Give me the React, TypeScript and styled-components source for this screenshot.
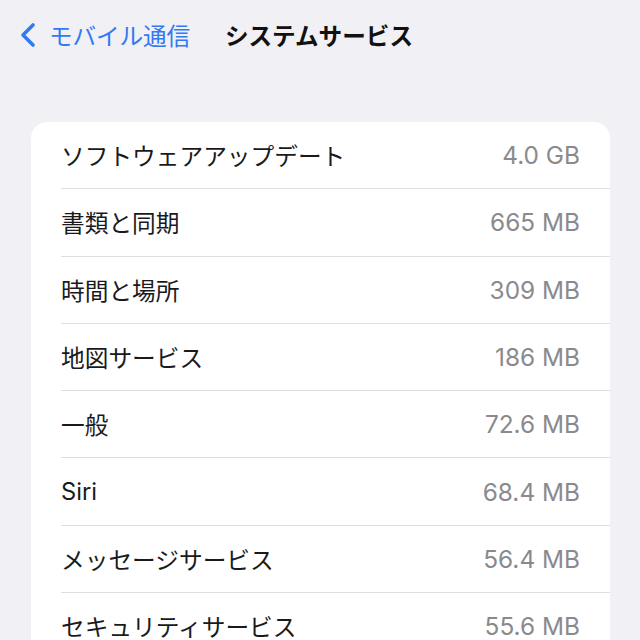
import styled, { createGlobalStyle } from "styled-components";

const GlobalStyle = createGlobalStyle`
  html, body {
    margin: 0;
    padding: 0;
    background: #f0f0f5;
  }
  body {
    font-family: "Inter", "Noto Sans CJK JP", sans-serif;
    -webkit-font-smoothing: antialiased;
  }
`;

const Page = styled.div`
  width: 640px;
  height: 640px;
  overflow: hidden;
  background: #f0f0f5;
`;

const NavBar = styled.div`
  height: 72px;
  display: flex;
  align-items: center;
  padding: 0 0 2px 18px;
  box-sizing: border-box;
`;

const BackButton = styled.div`
  display: flex;
  align-items: center;
  gap: 11px;
  color: #3379f3;
  font-size: 23.7px;
  letter-spacing: -0.2px;
`;

const Title = styled.div`
  margin-left: 35px;
  font-size: 23.6px;
  font-weight: 700;
  color: #111;
`;

const Card = styled.div`
  margin: 50px 30px 0 31px;
  background: #fff;
  border-radius: 16px;
  overflow: hidden;
`;

const Row = styled.div`
  padding-left: 30px;
`;

const RowInner = styled.div<{ $last?: boolean }>`
  height: 66.3px;
  display: flex;
  align-items: center;
  justify-content: space-between;
  padding-right: 30px;
  border-bottom: ${(p) => (p.$last ? "none" : "1px solid #dedee2")};
`;

const Label = styled.span`
  font-size: 23.7px;
  color: #1a1a1c;
`;

const Value = styled.span`
  font-size: 24.4px;
  color: #8a8a8e;
`;

const items = [
  { label: "ソフトウェアアップデート", value: "4.0 GB" },
  { label: "書類と同期", value: "665 MB" },
  { label: "時間と場所", value: "309 MB" },
  { label: "地図サービス", value: "186 MB" },
  { label: "一般", value: "72.6 MB" },
  { label: "Siri", value: "68.4 MB" },
  { label: "メッセージサービス", value: "56.4 MB" },
  { label: "セキュリティサービス", value: "55.6 MB" },
];

function Chevron() {
  return (
    <svg width="20" height="26" viewBox="0 0 20 26">
      <path
        d="M15 3 L5 13 L15 23"
        fill="none"
        stroke="#3379f3"
        strokeWidth="3.6"
        strokeLinecap="round"
        strokeLinejoin="round"
      />
    </svg>
  );
}

export default function App() {
  return (
    <Page>
      <GlobalStyle />
      <NavBar>
        <BackButton>
          <Chevron />
          <span>モバイル通信</span>
        </BackButton>
        <Title>システムサービス</Title>
      </NavBar>
      <Card>
        {items.map((it, i) => (
          <Row key={it.label}>
            <RowInner $last={i === items.length - 1}>
              <Label>{it.label}</Label>
              <Value>{it.value}</Value>
            </RowInner>
          </Row>
        ))}
      </Card>
    </Page>
  );
}
